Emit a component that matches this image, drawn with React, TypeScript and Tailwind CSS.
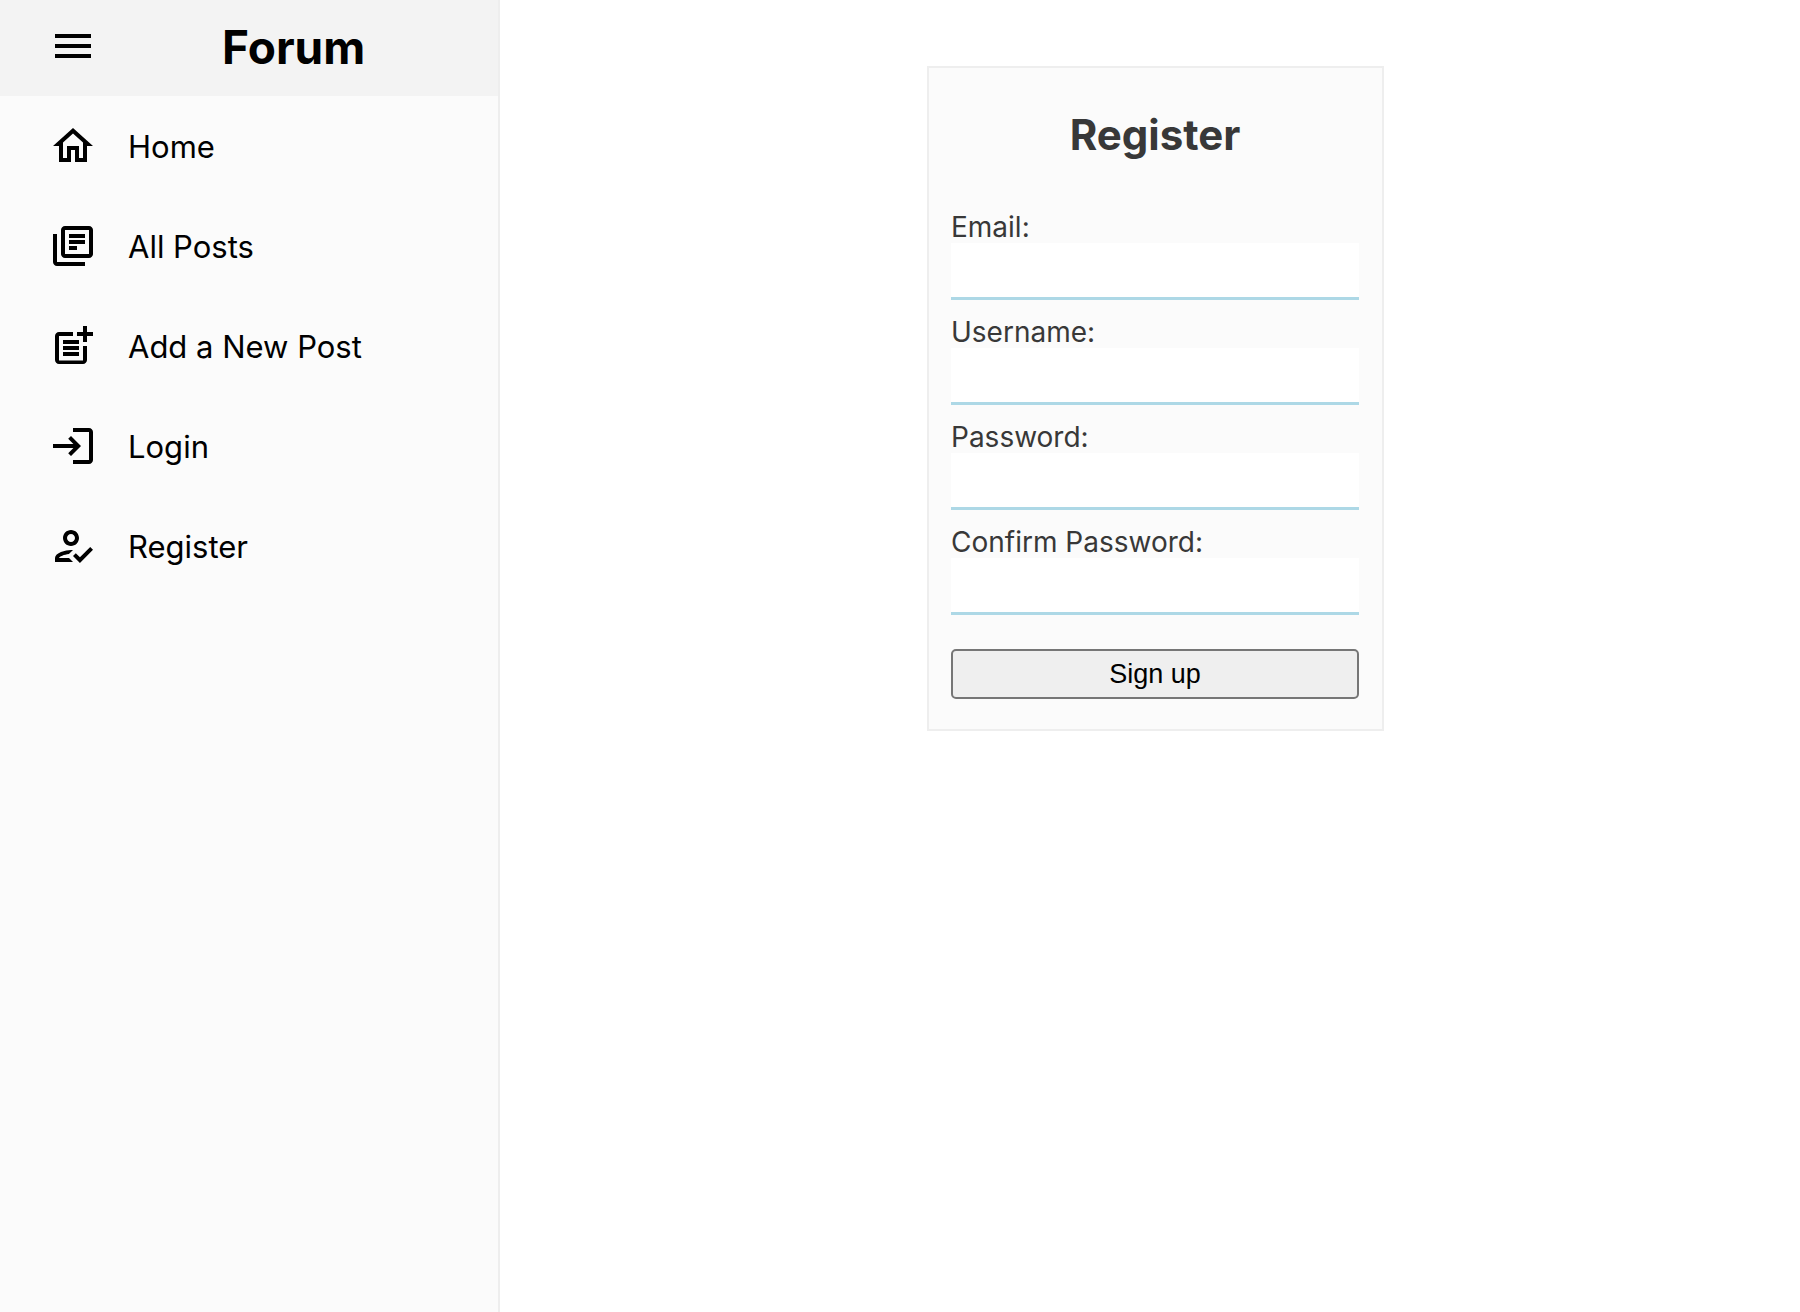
import {
  MdMenu,
  MdOutlineHome,
  MdOutlineHowToReg,
  MdOutlineLibraryBooks,
  MdOutlineLogin,
  MdOutlinePostAdd,
} from 'react-icons/md';
import type { IconType } from 'react-icons';

const links: { label: string; icon: IconType }[] = [
  { label: 'Home', icon: MdOutlineHome },
  { label: 'All Posts', icon: MdOutlineLibraryBooks },
  { label: 'Add a New Post', icon: MdOutlinePostAdd },
  { label: 'Login', icon: MdOutlineLogin },
  { label: 'Register', icon: MdOutlineHowToReg },
];

const fields = [
  { id: 'email', label: 'Email:', type: 'email' },
  { id: 'username', label: 'Username:', type: 'text' },
  { id: 'password', label: 'Password:', type: 'password' },
  { id: 'confirm', label: 'Confirm Password:', type: 'password' },
];

function Sidebar() {
  return (
    <aside className="w-[500px] shrink-0 border-r-2 border-[#eeeeee] bg-[#fbfbfb] text-black">
      <header className="flex h-24 items-center bg-[#f3f3f3] pb-1 pl-[49px]">
        <button type="button" aria-label="Toggle menu">
          <MdMenu className="size-12" />
        </button>
        <h1 className="ml-[125px] pt-0.5 text-[46px] leading-none font-bold">Forum</h1>
      </header>
      <nav>
        <ul>
          {links.map(({ label, icon: Icon }) => (
            <li key={label}>
              <a href="#" className="flex h-[100px] items-center gap-[31px] pl-[49px] text-[31px]">
                <Icon className="size-12" />
                <span className="pt-0.5">{label}</span>
              </a>
            </li>
          ))}
        </ul>
      </nav>
    </aside>
  );
}

function RegisterForm() {
  return (
    <form className="w-[457px] border-2 border-[#eeeeee] bg-[#fbfbfb] pr-[23px] pb-[30px] pl-[22px] text-[#383838]">
      <h2 className="pt-[41px] pb-[47px] text-center text-[42px] leading-[52px] font-bold">Register</h2>
      <div className="flex flex-col gap-[13px]">
        {fields.map(({ id, label, type }) => (
          <div key={id} className="flex flex-col">
            <label htmlFor={id} className="pt-1 text-[28px] leading-[31px]">
              {label}
            </label>
            <input
              id={id}
              type={type}
              className="h-[57px] w-full border-b-3 border-[#add8e6] bg-white px-2 text-[28px] outline-none"
            />
          </div>
        ))}
      </div>
      <button
        type="submit"
        className="mt-[34px] h-[50px] w-full rounded-[5px] border-2 border-[#767676] bg-[#efefef] font-['Liberation_Sans',sans-serif] text-[27px] leading-none text-black"
      >
        Sign up
      </button>
    </form>
  );
}

export default function App() {
  return (
    <div className="flex min-h-screen bg-white font-[Inter,sans-serif]">
      <Sidebar />
      <main className="flex flex-1 items-start justify-center pt-[66px] pl-[11px]">
        <RegisterForm />
      </main>
    </div>
  );
}
